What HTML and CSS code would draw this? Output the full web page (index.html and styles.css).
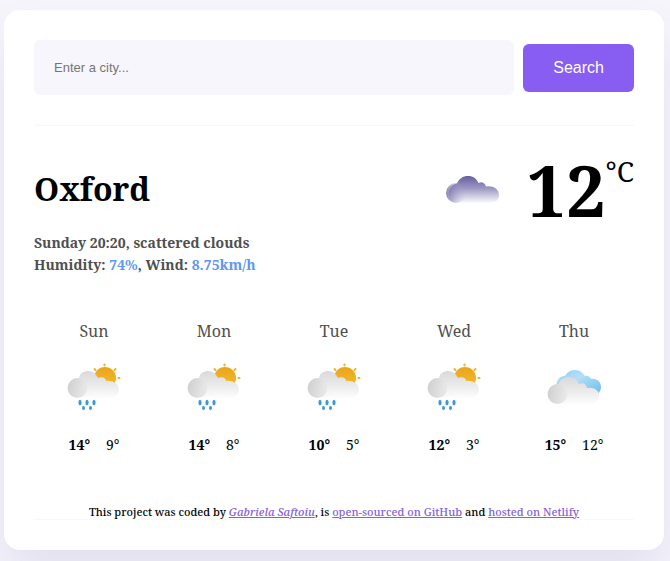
FILE: index.html
```html
<!DOCTYPE html>
<html lang="en">
<head>
<meta charset="utf-8">
<meta name="viewport" content="width=device-width, initial-scale=1">
<title>Weather in Oxford</title>
<link rel="stylesheet" href="styles.css">
</head>
<body>
<svg class="defs" width="0" height="0" aria-hidden="true">
  <defs>
    <linearGradient id="violet" x1="0" y1="0" x2="0" y2="1"><stop offset="0" stop-color="#665f9e"/><stop offset=".45" stop-color="#9b96c2"/><stop offset="1" stop-color="#fbfbfd"/></linearGradient>
    <linearGradient id="violet-puff" x1="0" y1="0" x2="1" y2="0"><stop offset="0" stop-color="#645d9e"/><stop offset="1" stop-color="#b4b0d0" stop-opacity="0"/></linearGradient>
    <linearGradient id="gray" x1="0" y1="0" x2="0" y2="1"><stop offset="0" stop-color="#d9d9da"/><stop offset=".5" stop-color="#eaeaeb"/><stop offset="1" stop-color="#fdfdfd"/></linearGradient>
    <linearGradient id="gray-puff" x1="0" y1="0" x2="1" y2="0"><stop offset="0" stop-color="#c9c9ca"/><stop offset="1" stop-color="#e8e8e9"/></linearGradient>
    <linearGradient id="blue" x1="0" y1="0" x2="1" y2="1"><stop offset="0" stop-color="#8fd0f5"/><stop offset=".4" stop-color="#b4def7"/><stop offset="1" stop-color="#65bbec"/></linearGradient>
    <linearGradient id="sun" x1="0" y1="0" x2="0" y2="1"><stop offset="0" stop-color="#e9a51d"/><stop offset="1" stop-color="#f7bd2c"/></linearGradient>
    <symbol id="rain" viewBox="0 0 54 48">
      <g stroke="#f0b12b" stroke-width="2" stroke-linecap="round"><path d="M37.500 1.500v1M27.500 6l1 1M48.500 6l-1 1M51.500 15h1"/></g>
      <circle cx="38" cy="15" r="11" fill="url(#sun)"/>
      <path fill="url(#gray)" d="M10 35a10 10 0 0 1 2-20C13 10 17 8 21 8c5 0 8 3 10 7 4-2 8 0 8 3 7-1 13 3 13 8.500C52 32 48 35 43 35z"/>
      <circle cx="10.500" cy="25" r="10" fill="url(#gray-puff)" opacity=".8"/>
      <g fill="#3c9bd0"><ellipse cx="13" cy="39.500" rx="1.600" ry="2.800"/><ellipse cx="20" cy="39.500" rx="1.600" ry="2.800"/><ellipse cx="27" cy="39.500" rx="1.600" ry="2.800"/><ellipse cx="16.500" cy="45" rx="1.500" ry="2"/><ellipse cx="23.500" cy="45" rx="1.500" ry="2"/></g>
    </symbol>
    <symbol id="clouds" viewBox="0 0 54 48">
      <path fill="url(#blue)" d="M11 28c-4-7 0-15 7-15 2-4 6-6 10-6 5 0 8 3 10 6 3-1 5 1 6 3 6-1 10 3 10 8 0 7-7 9-13 9z"/>
      <path fill="url(#gray)" d="M10 41a10 10 0 0 1 2-20c1-5 5-7 10-7 5 0 8 3 10 7 4-2 7 0 8 4 7-1 12 2 12 8 0 5-4 8-10 8z"/>
      <circle cx="10.500" cy="31" r="10" fill="url(#gray-puff)" opacity=".8"/>
    </symbol>
  </defs>
</svg>
<main class="card">
  <form class="search">
    <input class="search-input" type="search" placeholder="Enter a city..." aria-label="City">
    <button class="search-button" type="button">Search</button>
  </form>
  <section class="current">
    <div>
      <h1 class="city">Oxford</h1>
      <p class="details">Sunday 20:20, scattered clouds<br>Humidity: <span class="value">74%</span>, Wind: <span class="value">8.75km/h</span></p>
    </div>
    <div class="temperature">
      <svg class="current-icon" viewBox="0 0 54 28" role="img" aria-label="Scattered clouds">
        <path fill="url(#violet)" d="M10 27A10 10 0 0 1 11 7.500C13 2.500 17 0 22 0c5 0 8.500 2.500 10.500 7C36 5 39 7 40 10.500c7-1 13 2.500 13 8.500 0 5-4 8-9 8z"/>
        <circle cx="10" cy="17" r="10" fill="url(#violet-puff)" opacity=".75"/>
      </svg>
      <span class="degrees">12</span><span class="unit">°C</span>
    </div>
  </section>
  <section class="forecast" aria-label="Forecast">
    <div class="day"><div class="day-name">Sun</div><svg class="day-icon" aria-hidden="true"><use href="#rain"/></svg><div class="range"><b>14°</b><span>9°</span></div></div>
    <div class="day"><div class="day-name">Mon</div><svg class="day-icon" aria-hidden="true"><use href="#rain"/></svg><div class="range"><b>14°</b><span>8°</span></div></div>
    <div class="day"><div class="day-name">Tue</div><svg class="day-icon" aria-hidden="true"><use href="#rain"/></svg><div class="range"><b>10°</b><span>5°</span></div></div>
    <div class="day"><div class="day-name">Wed</div><svg class="day-icon" aria-hidden="true"><use href="#rain"/></svg><div class="range"><b>12°</b><span>3°</span></div></div>
    <div class="day"><div class="day-name">Thu</div><svg class="day-icon" aria-hidden="true"><use href="#clouds"/></svg><div class="range"><b>15°</b><span>12°</span></div></div>
  </section>
  <footer class="credits">This project was coded by <a class="author" href="#">Gabriela Saftoiu</a>, is <a href="#">open-sourced on GitHub</a> and <a href="#">hosted on Netlify</a></footer>
</main>
</body>
</html>
```

FILE: styles.css
```css
* { box-sizing: border-box; }

body {
  margin: 0;
  padding: 10px 6px 11px 4px;
  background: #f6f5fc;
  color: #000;
  font-family: "Noto Serif", "Droid Serif", "DejaVu Serif", serif;
}

.defs { position: absolute; }

.card {
  max-width: 660px;
  margin: 0 auto;
  padding: 30px;
  border-radius: 16px;
  background: #fff;
  box-shadow: 0 30px 50px rgba(65, 50, 130, 0.1);
}

.search {
  display: flex;
  align-items: center;
  gap: 9px;
  padding-bottom: 30px;
  border-bottom: 1px solid #f7f7fb;
}

.search-input {
  flex: 1;
  min-width: 0;
  height: 55px;
  padding: 0 20px;
  border: 0;
  border-radius: 6px;
  background: #f7f6fd;
  font: 13px "Liberation Sans", sans-serif;
}

.search-input::placeholder { color: #757575; }

.search-button {
  height: 48px;
  padding: 0 30px;
  border: 0;
  border-radius: 6px;
  background: #885df1;
  color: #fff;
  font: 16px "Liberation Sans", sans-serif;
}

.current {
  display: flex;
  justify-content: space-between;
  padding-top: 29px;
}

.city {
  margin: 12px 0 21px;
  font-size: 32px;
  line-height: 44px;
}

.details {
  margin: 0;
  color: #4f4f4f;
  font-size: 14px;
  font-weight: bold;
  line-height: 22px;
}

.value { color: #6097f0; }

.temperature {
  display: flex;
  align-items: flex-start;
}

.current-icon {
  width: 54px;
  height: 28px;
  margin: 21px 26px 0 0;
}

.degrees {
  font-size: 70px;
  font-weight: bold;
  line-height: 70px;
}

.unit {
  font-size: 28px;
  line-height: 32px;
}

.forecast {
  display: grid;
  grid-template-columns: repeat(5, 1fr);
  margin-top: 44px;
}

.day { text-align: center; }

.day-name {
  color: #4f4f4f;
  font-size: 16px;
  line-height: 22px;
}

.day-icon {
  display: block;
  width: 54px;
  height: 48px;
  margin: 21px auto 24px;
}

.range {
  display: flex;
  justify-content: center;
  gap: 16px;
  font-size: 14px;
  line-height: 20px;
}

.credits {
  margin-top: 50px;
  border-bottom: 1px solid #f9f9fc;
  font-size: 11px;
  font-weight: 500;
  line-height: 14px;
  text-align: center;
}

.credits a { color: #8460d8; }

.author { font-style: italic; }
```
